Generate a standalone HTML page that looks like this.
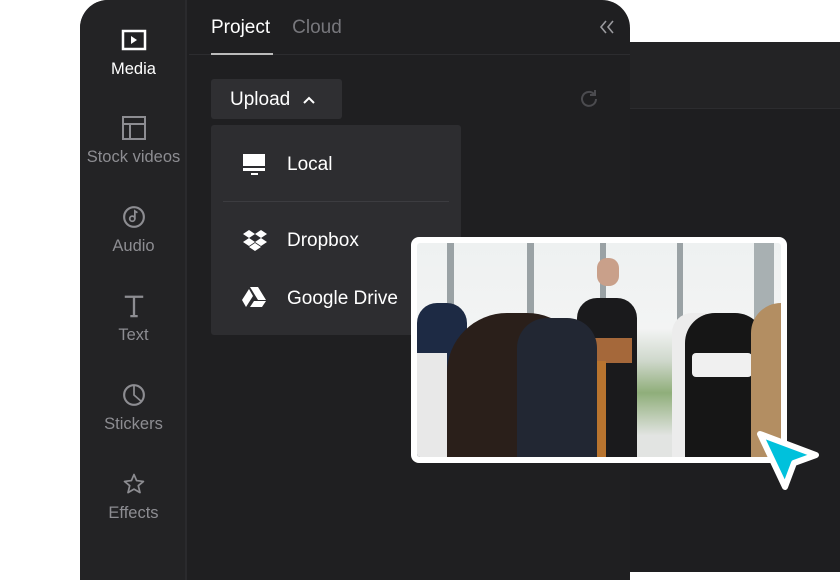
<!DOCTYPE html>
<html><head><meta charset="utf-8"><style>
*{margin:0;padding:0;box-sizing:border-box}
body{width:840px;height:560px;background:#fff;position:relative;overflow:hidden;font-family:"Liberation Sans",sans-serif}
.back{position:absolute;left:600px;top:42px;width:260px;height:530px;background:#1e1e20;border-radius:12px 0 0 0}
.backtop{position:absolute;left:600px;top:42px;width:260px;height:67px;background:#232325;border-bottom:1px solid #2c2c2f;border-radius:12px 0 0 0}
.panel{position:absolute;left:80px;top:0;width:550px;height:580px;background:#1f1f21;border-radius:28px 28px 0 0;overflow:hidden}
.side{position:absolute;left:0;top:0;width:107px;height:100%;background:#232325;border-right:2px solid #2a2a2d}
.item{position:absolute;left:0;width:107px;text-align:center;color:#8d8d92;font-size:16.5px;line-height:18px}
.item svg{display:block;margin:0 auto 8px}
.tabs{position:absolute;left:131px;top:17px;font-size:19px;color:#fff}
.line{position:absolute;left:109px;top:54px;width:441px;height:1px;background:#2c2c2f}
.ul{position:absolute;left:131px;top:53px;width:62px;height:2px;background:#bbb}
.btn{position:absolute;left:131px;top:79px;width:131px;height:40px;background:#2f2f32;border-radius:3px;color:#fff;font-size:19px;padding:10px 0 0 19px}
.menu{position:absolute;left:131px;top:125px;width:250px;height:210px;background:#2d2d30;border-radius:3px}
.mi{position:absolute;left:76px;color:#fff;font-size:19px}
.photo{position:absolute;left:411px;top:237px;width:376px;height:226px;background:#fff;border-radius:8px;padding:6px}
.img{width:364px;height:214px;border-radius:3px;position:relative;overflow:hidden;background:linear-gradient(#eef1f1 0%,#f3f4f4 40%,#cfd8cc 55%,#8fae7a 70%,#e2e4e2 90%)}
.img div{position:absolute}
</style></head><body>
<div class="back"></div><div class="backtop"></div>
<div class="panel">
 <div class="side">
  <div class="item" style="top:28px;color:#fff"><svg width="26" height="24" viewBox="0 0 26 24"><rect x="2" y="3" width="22" height="18" fill="none" stroke="#fff" stroke-width="2.5"/><path d="M10 8l6 4-6 4z" fill="#fff"/></svg>Media</div>
  <div class="item" style="top:116px"><svg width="26" height="24" viewBox="0 0 26 24"><rect x="2" y="1" width="22" height="22" fill="none" stroke="#8d8d92" stroke-width="2"/><path d="M2 8h22M9 8v15" stroke="#8d8d92" stroke-width="2"/></svg>Stock videos</div>
  <div class="item" style="top:205px"><svg width="28" height="24" viewBox="0 0 28 28"><circle cx="14" cy="14" r="11.5" fill="none" stroke="#8d8d92" stroke-width="2.5"/><circle cx="12" cy="16" r="3" fill="none" stroke="#8d8d92" stroke-width="2"/><path d="M15 16V7l3 2" fill="none" stroke="#8d8d92" stroke-width="2"/></svg>Audio</div>
  <div class="item" style="top:294px"><svg width="26" height="24" viewBox="0 0 26 26"><path d="M3 3h20M13 3v21M9 24h8" stroke="#8d8d92" stroke-width="2.5" fill="none"/></svg>Text</div>
  <div class="item" style="top:383px"><svg width="28" height="24" viewBox="0 0 28 28"><circle cx="14" cy="14" r="11.5" fill="none" stroke="#8d8d92" stroke-width="2.5"/><path d="M14 3v11l8 7" fill="none" stroke="#8d8d92" stroke-width="2"/></svg>Stickers</div>
  <div class="item" style="top:472px"><svg width="28" height="24" viewBox="0 0 28 28"><path d="M14 3l3 7 8 1-6 5 2 8-7-4-7 4 2-8-6-5 8-1z" fill="none" stroke="#8d8d92" stroke-width="2" stroke-linejoin="round"/></svg>Effects</div>
 </div>
 <div class="tabs">Project<span style="color:#77777c;margin-left:22px">Cloud</span></div>
 <svg style="position:absolute;left:518px;top:19px" width="18" height="16" viewBox="0 0 18 16"><path d="M8 2L3 8l5 6M15 2l-5 6 5 6" fill="none" stroke="#9a9a9e" stroke-width="1.6"/></svg>
 <div class="line"></div><div class="ul"></div>
 <div class="btn">Upload <svg width="14" height="10" viewBox="0 0 14 10" style="margin-left:6px"><path d="M2 8l5-5 5 5" fill="none" stroke="#fff" stroke-width="2"/></svg></div>
 <svg style="position:absolute;left:498px;top:88px" width="22" height="22" viewBox="0 0 22 22"><path d="M18 11a7 7 0 1 1-2-5M17 2v5h-5" fill="none" stroke="#4b4b4f" stroke-width="2"/></svg>
 <div class="menu">
  <svg style="position:absolute;left:31px;top:28px" width="24" height="22" viewBox="0 0 24 22"><rect x="1" y="1" width="22" height="12" fill="#fff"/><rect x="1" y="15" width="22" height="3" fill="#fff"/><rect x="9" y="20" width="7" height="2" fill="#fff"/></svg>
  <div class="mi" style="top:29px">Local</div>
  <div style="position:absolute;left:12px;top:76px;width:226px;height:1px;background:#3c3c40"></div>
  <svg style="position:absolute;left:31px;top:104px" width="26" height="22" viewBox="0 0 26 22"><path d="M7 1l6 4-6 4-6-4zM19 1l6 4-6 4-6-4zM7 9l6 4-6 4-6-4zM19 9l6 4-6 4-6-4zM13 14l6 4-6 4-6-4z" fill="#fff"/></svg>
  <div class="mi" style="top:105px">Dropbox</div>
  <svg style="position:absolute;left:31px;top:161px" width="24" height="22" viewBox="0 0 24 22"><path d="M8 1h8l8 13h-8zM7 3l4 7-7 11-4-7zM12 15h12l-4 6H8z" fill="#fff"/></svg>
  <div class="mi" style="top:163px">Google Drive</div>
 </div>
</div>
<div class="photo"><div class="img">
 <div style="left:30px;top:0;width:7px;height:150px;background:#9aa2a5"></div>
 <div style="left:110px;top:0;width:7px;height:150px;background:#9aa2a5"></div>
 <div style="left:183px;top:0;width:6px;height:150px;background:#9aa2a5"></div>
 <div style="left:260px;top:0;width:6px;height:150px;background:#9aa2a5"></div>
 <div style="left:337px;top:0;width:20px;height:150px;background:#a8b0b2"></div>
 <div style="left:160px;top:55px;width:60px;height:159px;background:#1a1a1c;border-radius:20px 20px 0 0"></div>
 <div style="left:180px;top:15px;width:22px;height:28px;background:#c9a08a;border-radius:10px"></div>
 <div style="left:153px;top:95px;width:62px;height:25px;background:#a5683a"></div>
 <div style="left:177px;top:118px;width:12px;height:96px;background:#b8742f"></div>
 <div style="left:0;top:60px;width:50px;height:154px;background:#1d2a44;border-radius:20px 20px 0 0"></div>
 <div style="left:0;top:110px;width:30px;height:104px;background:#e8e8e8"></div>
 <div style="left:30px;top:70px;width:140px;height:144px;background:#2a1f1a;border-radius:60px 60px 0 0"></div>
 <div style="left:100px;top:75px;width:80px;height:139px;background:#222733;border-radius:30px 30px 0 0"></div>
 <div style="left:255px;top:70px;width:50px;height:144px;background:#ececec;border-radius:20px 20px 0 0"></div>
 <div style="left:268px;top:70px;width:80px;height:144px;background:#161616;border-radius:30px 30px 0 0"></div>
 <div style="left:275px;top:110px;width:60px;height:24px;background:#f0f0f0;border-radius:4px"></div>
 <div style="left:334px;top:60px;width:40px;height:154px;background:#b38e62;border-radius:30px 0 0 0"></div>
</div></div>
<svg style="position:absolute;left:748px;top:424px" width="76" height="72" viewBox="0 0 76 72"><path d="M12 10l56 21-22 8-9 24z" fill="#00c1dc" stroke="#fff" stroke-width="6" stroke-linejoin="round"/></svg>
</body></html>
